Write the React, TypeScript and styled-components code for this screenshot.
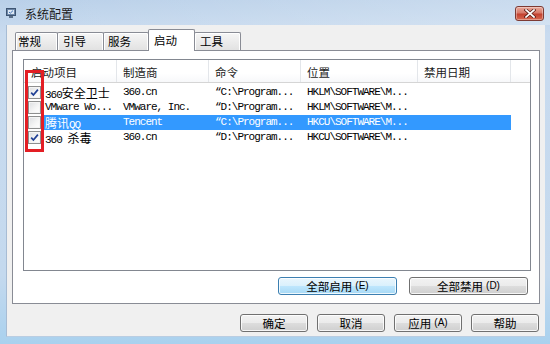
import React from "react";
import styled, { createGlobalStyle, css } from "styled-components";

const Global = createGlobalStyle`
  html, body { margin: 0; padding: 0; background: #c5d9ee; }
  body { width: 550px; height: 344px; overflow: hidden; }
  * { box-sizing: border-box; }
`;

const UI = `"Noto Sans CJK SC", "Noto Sans", sans-serif`;
const MONO = `"Liberation Mono", "Noto Sans CJK SC", monospace`;

const Window = styled.div`
  width: 550px;
  height: 344px;
  display: flex;
  flex-direction: column;
  padding: 0 5px 8px 6px;
  background: linear-gradient(180deg, #b9d0e9 0%, #c9dbef 10%, #c4d9ee 80%, #a9d1ee 100%);
  font-family: ${UI};
  color: #000;
`;

const TitleBar = styled.div`
  height: 25px;
  flex: none;
  display: flex;
  align-items: center;
  background: linear-gradient(90deg, rgba(255, 255, 255, 0) 0%, rgba(255, 255, 255, 0.25) 100%);
  margin: 0 -5px 0 -6px;
  padding: 0 6px 0 6px;
`;

const TitleIcon = styled.svg`
  width: 10px;
  height: 10px;
  flex: none;
  margin-top: 1px;
`;

const TitleText = styled.span`
  margin-left: 9px;
  font-size: 12px;
  color: #1a1a1a;
  line-height: 14px;
  margin-top: 2px;
`;

const CloseButton = styled.div`
  margin-left: auto;
  width: 29px;
  height: 15px;
  margin-top: 2px;
  border: 1px solid #7d3a33;
  border-radius: 3px;
  background: linear-gradient(180deg, #e9a99b 0%, #d77a6a 45%, #c2412f 55%, #d86a52 100%);
  box-shadow: inset 0 0 0 1px rgba(255, 255, 255, 0.35);
  display: flex;
  align-items: center;
  justify-content: center;
`;

const Client = styled.div`
  flex: 1;
  display: flex;
  flex-direction: column;
  background: #f0f0f0;
  padding: 4px 5px 4px 5px;
  border-left: 1px solid #a7bcd4;
  border-bottom: 1px solid #b9cde2;
`;

const TabStrip = styled.div`
  height: 21px;
  flex: none;
  display: flex;
  align-items: flex-end;
  padding-left: 4px;
  position: relative;
  z-index: 1;
`;

const Tab = styled.div<{ $w: number; $pad: number; $active?: boolean }>`
  width: ${(p) => p.$w}px;
  margin-left: -1px;
  padding-left: ${(p) => p.$pad}px;
  border: 1px solid #898c95;
  border-bottom: none;
  font-size: 11.5px;
  line-height: 17px;
  white-space: nowrap;
  ${(p) =>
    p.$active
      ? css`
          height: 22px;
          margin-bottom: -1px;
          padding-top: 2px;
          background: #ffffff;
          border-radius: 2px 2px 0 0;
          position: relative;
          z-index: 2;
        `
      : css`
          height: 18px;
          background: linear-gradient(180deg, #f6f6f6 0%, #ececec 50%, #e2e2e2 100%);
          box-shadow: inset 1px 1px 0 #ffffff, inset -1px 0 0 #ffffff;
          border-radius: 2px 2px 0 0;
        `}
`;

const Panel = styled.div`
  height: 254px;
  flex: none;
  background: #ffffff;
  border: 1px solid #898c95;
  padding: 8px 8px 8px 10px;
  display: flex;
  flex-direction: column;
`;

const ListView = styled.div`
  flex: 1;
  position: relative;
  border: 1px solid #828790;
  background: #ffffff;
  display: flex;
  flex-direction: column;
`;

const COLS = "93px 92px 92px 117px 93px 1fr";

const Header = styled.div`
  height: 23px;
  flex: none;
  display: grid;
  grid-template-columns: ${COLS};
  border-bottom: 1px solid #d5d5d5;
  background: linear-gradient(180deg, #ffffff 0%, #ffffff 60%, #f7f8fa 100%);
`;

const HeaderCell = styled.div<{ $first?: boolean; $filler?: boolean }>`
  padding-left: ${(p) => (p.$first ? 7 : 6)}px;
  padding-top: 3px;
  font-size: 11.5px;
  line-height: 18px;
  color: #1b1b1b;
  white-space: nowrap;
  border-right: ${(p) => (p.$filler ? "none" : "1px solid #e3e6ea")};
`;

const Rows = styled.div`
  padding-top: 2px;
  display: flex;
  flex-direction: column;
`;

const Row = styled.div`
  height: 15px;
  display: flex;
  align-items: center;
`;

const CheckSlot = styled.div`
  width: 20px;
  flex: none;
  display: flex;
  align-items: center;
  padding-left: 4px;
`;

const CheckBox = styled.div`
  width: 13px;
  height: 13px;
  border: 1px solid #8e8f8f;
  background: linear-gradient(135deg, #dcdee1 0%, #f6f6f6 60%, #ffffff 100%);
  box-shadow: inset 0 0 0 1px #f4f4f4;
  display: flex;
  align-items: center;
  justify-content: center;
`;

const RowBody = styled.div<{ $selected?: boolean }>`
  display: grid;
  grid-template-columns: 73px 92px 92px 117px 93px;
  height: 15px;
  background: ${(p) => (p.$selected ? "#3399ff" : "transparent")};
  color: ${(p) => (p.$selected ? "#ffffff" : "#000000")};
`;

const Cell = styled.div<{ $first?: boolean }>`
  height: 15px;
  display: flex;
  align-items: baseline;
  padding-left: ${(p) => (p.$first ? 1 : 6)}px;
  font-family: ${MONO};
  font-size: 11px;
  letter-spacing: -1px;
  line-height: 15px;
  white-space: pre;
  overflow: hidden;
`;

const Han = styled.span`
  font-family: "Noto Sans CJK SC", sans-serif;
  font-size: 12px;
  letter-spacing: 0;
  line-height: 15px;
`;

const Latin = styled.span`
  line-height: 15px;
`;

const Annotation = styled.div`
  position: absolute;
  left: 1px;
  top: 10px;
  width: 19px;
  height: 82px;
  border: 3px solid #e31e24;
  pointer-events: none;
`;

const PanelButtons = styled.div`
  margin-top: 6px;
  height: 18px;
  flex: none;
  display: flex;
  justify-content: flex-end;
  gap: 12px;
  padding-right: 3px;
`;

const DialogButtons = styled.div`
  margin-top: 10px;
  height: 18px;
  flex: none;
  display: flex;
  justify-content: flex-end;
  gap: 9px;
  padding-right: 1px;
`;

const Button = styled.div<{ $w: number; $default?: boolean }>`
  width: ${(p) => p.$w}px;
  height: 18px;
  border: 1px solid ${(p) => (p.$default ? "#3c7fb1" : "#707070")};
  border-radius: 3px;
  background: ${(p) =>
    p.$default
      ? "linear-gradient(180deg, #eaf6fd 0%, #d9f0fc 50%, #bee6fd 51%, #a7d9f5 100%)"
      : "linear-gradient(180deg, #f2f2f2 0%, #ebebeb 50%, #dddddd 51%, #cfcfcf 100%)"};
  box-shadow: inset 0 0 0 1px rgba(255, 255, 255, 0.8);
  display: flex;
  align-items: center;
  justify-content: center;
  font-size: 11.5px;
  line-height: 16px;
  color: #000;
  white-space: nowrap;
`;

const Mnemonic = styled.span`
  font-family: "Liberation Sans", sans-serif;
  font-size: 10px;
  margin-left: 3px;
`;

type Entry = {
  checked: boolean;
  selected?: boolean;
  name: string;
  maker: string;
  cmd: string;
  loc: string;
};

const entries: Entry[] = [
  { checked: true, name: "360安全卫士", maker: "360.cn", cmd: "“C:\\Program...", loc: "HKLM\\SOFTWARE\\M..." },
  { checked: false, name: "VMware Wo...", maker: "VMware, Inc.", cmd: "“D:\\Program...", loc: "HKLM\\SOFTWARE\\M..." },
  { checked: false, selected: true, name: "腾讯QQ", maker: "Tencent", cmd: "“C:\\Program...", loc: "HKCU\\SOFTWARE\\M..." },
  { checked: true, name: "360 杀毒", maker: "360.cn", cmd: "“D:\\Program...", loc: "HKCU\\SOFTWARE\\M..." },
];

const tabs = [
  { label: "常规", w: 43, pad: 2 },
  { label: "引导", w: 47, pad: 5 },
  { label: "服务", w: 46, pad: 4 },
  { label: "启动", w: 47, pad: 5, active: true },
  { label: "工具", w: 47, pad: 5 },
];

const headers = ["启动项目", "制造商", "命令", "位置", "禁用日期"];

const HAN_RUN = /([\u3000-\u9fff\uff00-\uffef]+)/;

function mixed(text: string) {
  return text
    .split(HAN_RUN)
    .filter((part) => part.length > 0)
    .map((part, i) =>
      HAN_RUN.test(part) ? <Han key={i}>{part}</Han> : <Latin key={i}>{part}</Latin>
    );
}

const Check = () => (
  <svg width="9" height="9" viewBox="0 0 9 9">
    <path d="M1.2 4.6 L3.4 7 L7.9 1.6" fill="none" stroke="#1f3f94" strokeWidth="1.7" />
  </svg>
);

export default function App() {
  return (
    <>
      <Global />
      <Window>
        <TitleBar>
          <TitleIcon viewBox="0 0 10 10">
            <rect x="0.5" y="0.5" width="9" height="7" fill="#6d87a8" stroke="#3e5573" strokeWidth="1" />
            <rect x="2" y="2" width="6" height="4" fill="#dce7f3" />
            <path d="M3 4 L4.3 5.2 L7 2.6" fill="none" stroke="#3d6fb5" strokeWidth="1" />
            <rect x="3" y="8" width="4" height="2" fill="#5b6f88" />
          </TitleIcon>
          <TitleText>系统配置</TitleText>
          <CloseButton>
            <svg width="12" height="9" viewBox="0 0 12 9">
              <path d="M2 1 L10 8 M10 1 L2 8" stroke="#5a1d16" strokeWidth="3.2" strokeLinecap="square" />
              <path d="M2 1 L10 8 M10 1 L2 8" stroke="#ffffff" strokeWidth="1.7" strokeLinecap="square" />
            </svg>
          </CloseButton>
        </TitleBar>
        <Client>
          <TabStrip>
            {tabs.map((t) => (
              <Tab key={t.label} $w={t.w} $pad={t.pad} $active={t.active}>
                {t.label}
              </Tab>
            ))}
          </TabStrip>
          <Panel>
            <ListView>
              <Header>
                {headers.map((h, i) => (
                  <HeaderCell key={h} $first={i === 0}>
                    {h}
                  </HeaderCell>
                ))}
                <HeaderCell $filler />
              </Header>
              <Rows>
                {entries.map((e) => (
                  <Row key={e.name}>
                    <CheckSlot>
                      <CheckBox>{e.checked && <Check />}</CheckBox>
                    </CheckSlot>
                    <RowBody $selected={e.selected}>
                      <Cell $first>{mixed(e.name)}</Cell>
                      <Cell>{e.maker}</Cell>
                      <Cell>{e.cmd}</Cell>
                      <Cell>{e.loc}</Cell>
                      <Cell />
                    </RowBody>
                  </Row>
                ))}
              </Rows>
              <Annotation />
            </ListView>
            <PanelButtons>
              <Button $w={119} $default>
                全部启用<Mnemonic>(E)</Mnemonic>
              </Button>
              <Button $w={119}>
                全部禁用<Mnemonic>(D)</Mnemonic>
              </Button>
            </PanelButtons>
          </Panel>
          <DialogButtons>
            <Button $w={68}>确定</Button>
            <Button $w={68}>取消</Button>
            <Button $w={68}>
              应用<Mnemonic>(A)</Mnemonic>
            </Button>
            <Button $w={68}>帮助</Button>
          </DialogButtons>
        </Client>
      </Window>
    </>
  );
}
